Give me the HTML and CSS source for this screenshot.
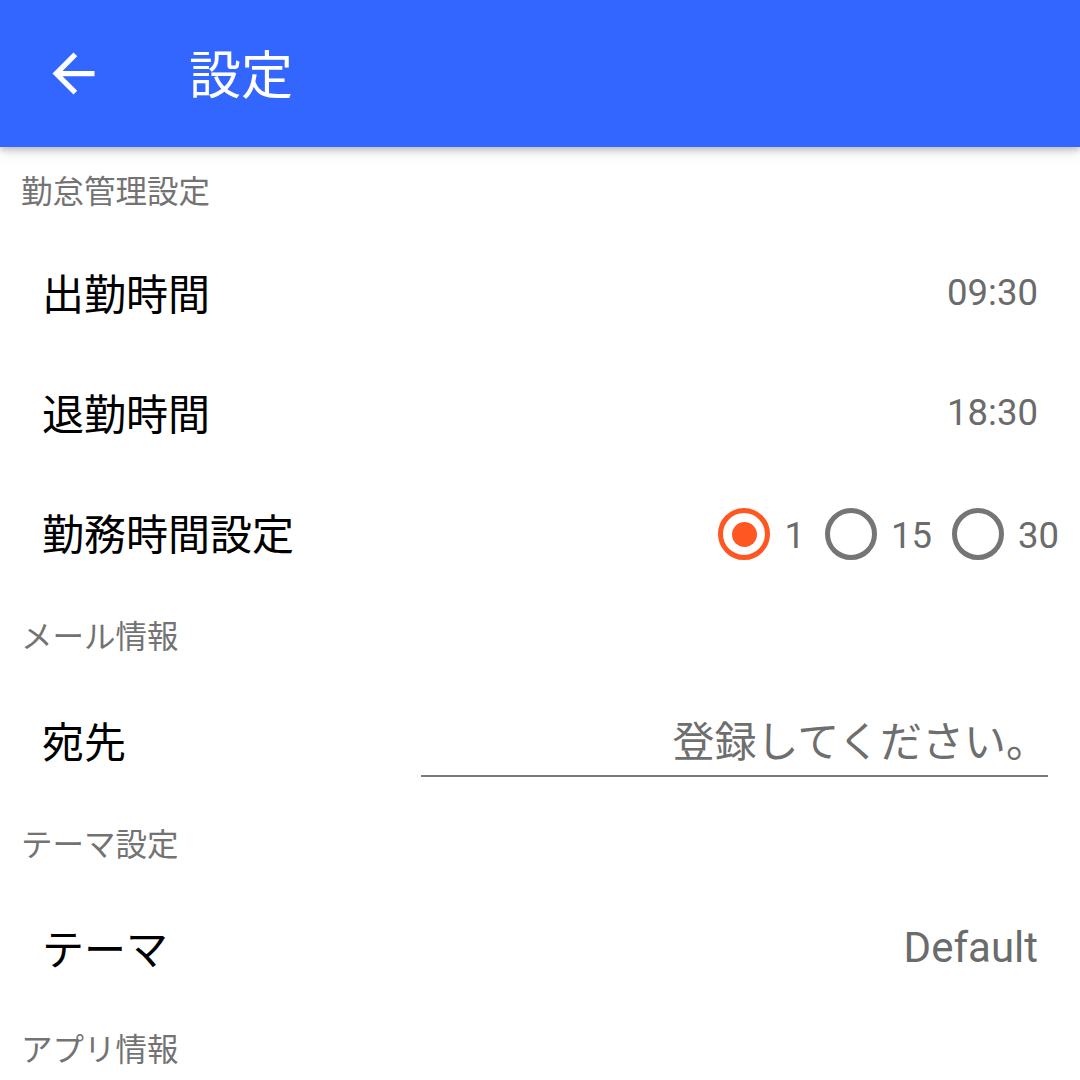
FILE: index.html
```html
<!DOCTYPE html>
<html lang="ja">
<head>
<meta charset="utf-8">
<title>設定</title>
<link rel="stylesheet" href="styles.css">
</head>
<body>
<header class="toolbar">
  <button class="back" aria-label="戻る">
    <svg viewBox="0 0 24 24" width="63" height="63"><path fill="#fff" d="M20 11H7.83l5.59-5.59L12 4l-8 8 8 8 1.41-1.41L7.83 13H20v-2z"/></svg>
  </button>
  <h1 class="title">設定</h1>
</header>
<main class="prefs">
  <div class="category cat-1">勤怠管理設定</div>
  <div class="row row-1"><span class="label">出勤時間</span><span class="value">09:30</span></div>
  <div class="row row-2"><span class="label">退勤時間</span><span class="value">18:30</span></div>
  <div class="row row-3"><span class="label">勤務時間設定</span>
    <div class="radios">
      <span class="radio checked"><span class="ring"></span><span class="rlabel">1</span></span>
      <span class="radio"><span class="ring"></span><span class="rlabel">15</span></span>
      <span class="radio"><span class="ring"></span><span class="rlabel">30</span></span>
    </div>
  </div>
  <div class="category cat-2">メール情報</div>
  <div class="row row-4"><span class="label">宛先</span>
    <div class="field"><span class="placeholder">登録してください。</span></div>
  </div>
  <div class="category cat-3">テーマ設定</div>
  <div class="row row-5"><span class="label">テーマ</span><span class="value value-lg">Default</span></div>
  <div class="category cat-4">アプリ情報</div>
</main>
</body>
</html>
```
FILE: styles.css
```css
html, body {
  margin: 0;
  padding: 0;
  background: #fff;
  width: 1080px;
  height: 1080px;
  overflow: hidden;
  font-family: Roboto, "Noto Sans CJK JP", sans-serif;
}

.toolbar {
  position: relative;
  z-index: 2;
  height: 147px;
  background: #3366ff;
  display: flex;
  align-items: center;
  box-shadow: 0 3px 6px rgba(0, 0, 0, 0.22), 0 6px 14px rgba(0, 0, 0, 0.08);
}

.back {
  width: 63px;
  height: 63px;
  margin-left: 42px;
  padding: 0;
  border: 0;
  background: none;
  display: flex;
}

.title {
  margin: 0 0 4px 84px;
  font-weight: 400;
  font-size: 52px;
  color: #fff;
  font-family: "Noto Sans CJK JP", sans-serif;
  line-height: 1;
}

.prefs {
  display: flex;
  flex-direction: column;
}

.category {
  display: flex;
  align-items: center;
  padding-left: 21px;
  font-size: 31.5px;
  color: #737373;
}
.cat-1 { height: 84px; }
.cat-2 { height: 86px; }
.cat-3 { height: 82px; }
.cat-4 { height: 76px; }

.row {
  display: flex;
  align-items: center;
  justify-content: space-between;
  padding: 0 42px 0 42px;
}
.row-1, .row-2 { height: 120px; }
.row-3 { height: 120px; padding-right: 21px; }
.row-4 { height: 124px; padding-right: 32px; }
.row-5 { height: 126px; }

.label {
  font-size: 42px;
  color: #000;
}

.value {
  font-size: 36.5px;
  color: #6b6b6b;
  margin-top: 3px;
}
.value-lg { font-size: 42px; margin-top: 2px; }

.radios {
  display: flex;
  align-items: center;
  gap: 20px;
  margin-top: 6px;
}

.radio {
  display: flex;
  align-items: center;
  gap: 14px;
}

.ring {
  width: 52px;
  height: 52px;
  box-sizing: border-box;
  border: 5px solid #757575;
  border-radius: 50%;
  display: flex;
  align-items: center;
  justify-content: center;
}

.checked .ring {
  border-color: #ff5722;
}
.checked .ring::after {
  content: "";
  width: 25px;
  height: 25px;
  border-radius: 50%;
  background: #ff5722;
}

.rlabel {
  font-size: 36.5px;
  color: #6b6b6b;
  margin-top: 2px;
}

.field {
  width: 627px;
  height: 66px;
  box-sizing: border-box;
  border-bottom: 2px solid #7a7a7a;
  display: flex;
  align-items: flex-end;
  justify-content: flex-end;
  padding-bottom: 15px;
  margin-top: 9px;
}

.placeholder {
  font-size: 42px;
  line-height: 42px;
  color: #6e6e6e;
  font-family: "Noto Sans CJK JP", sans-serif;
}
```
